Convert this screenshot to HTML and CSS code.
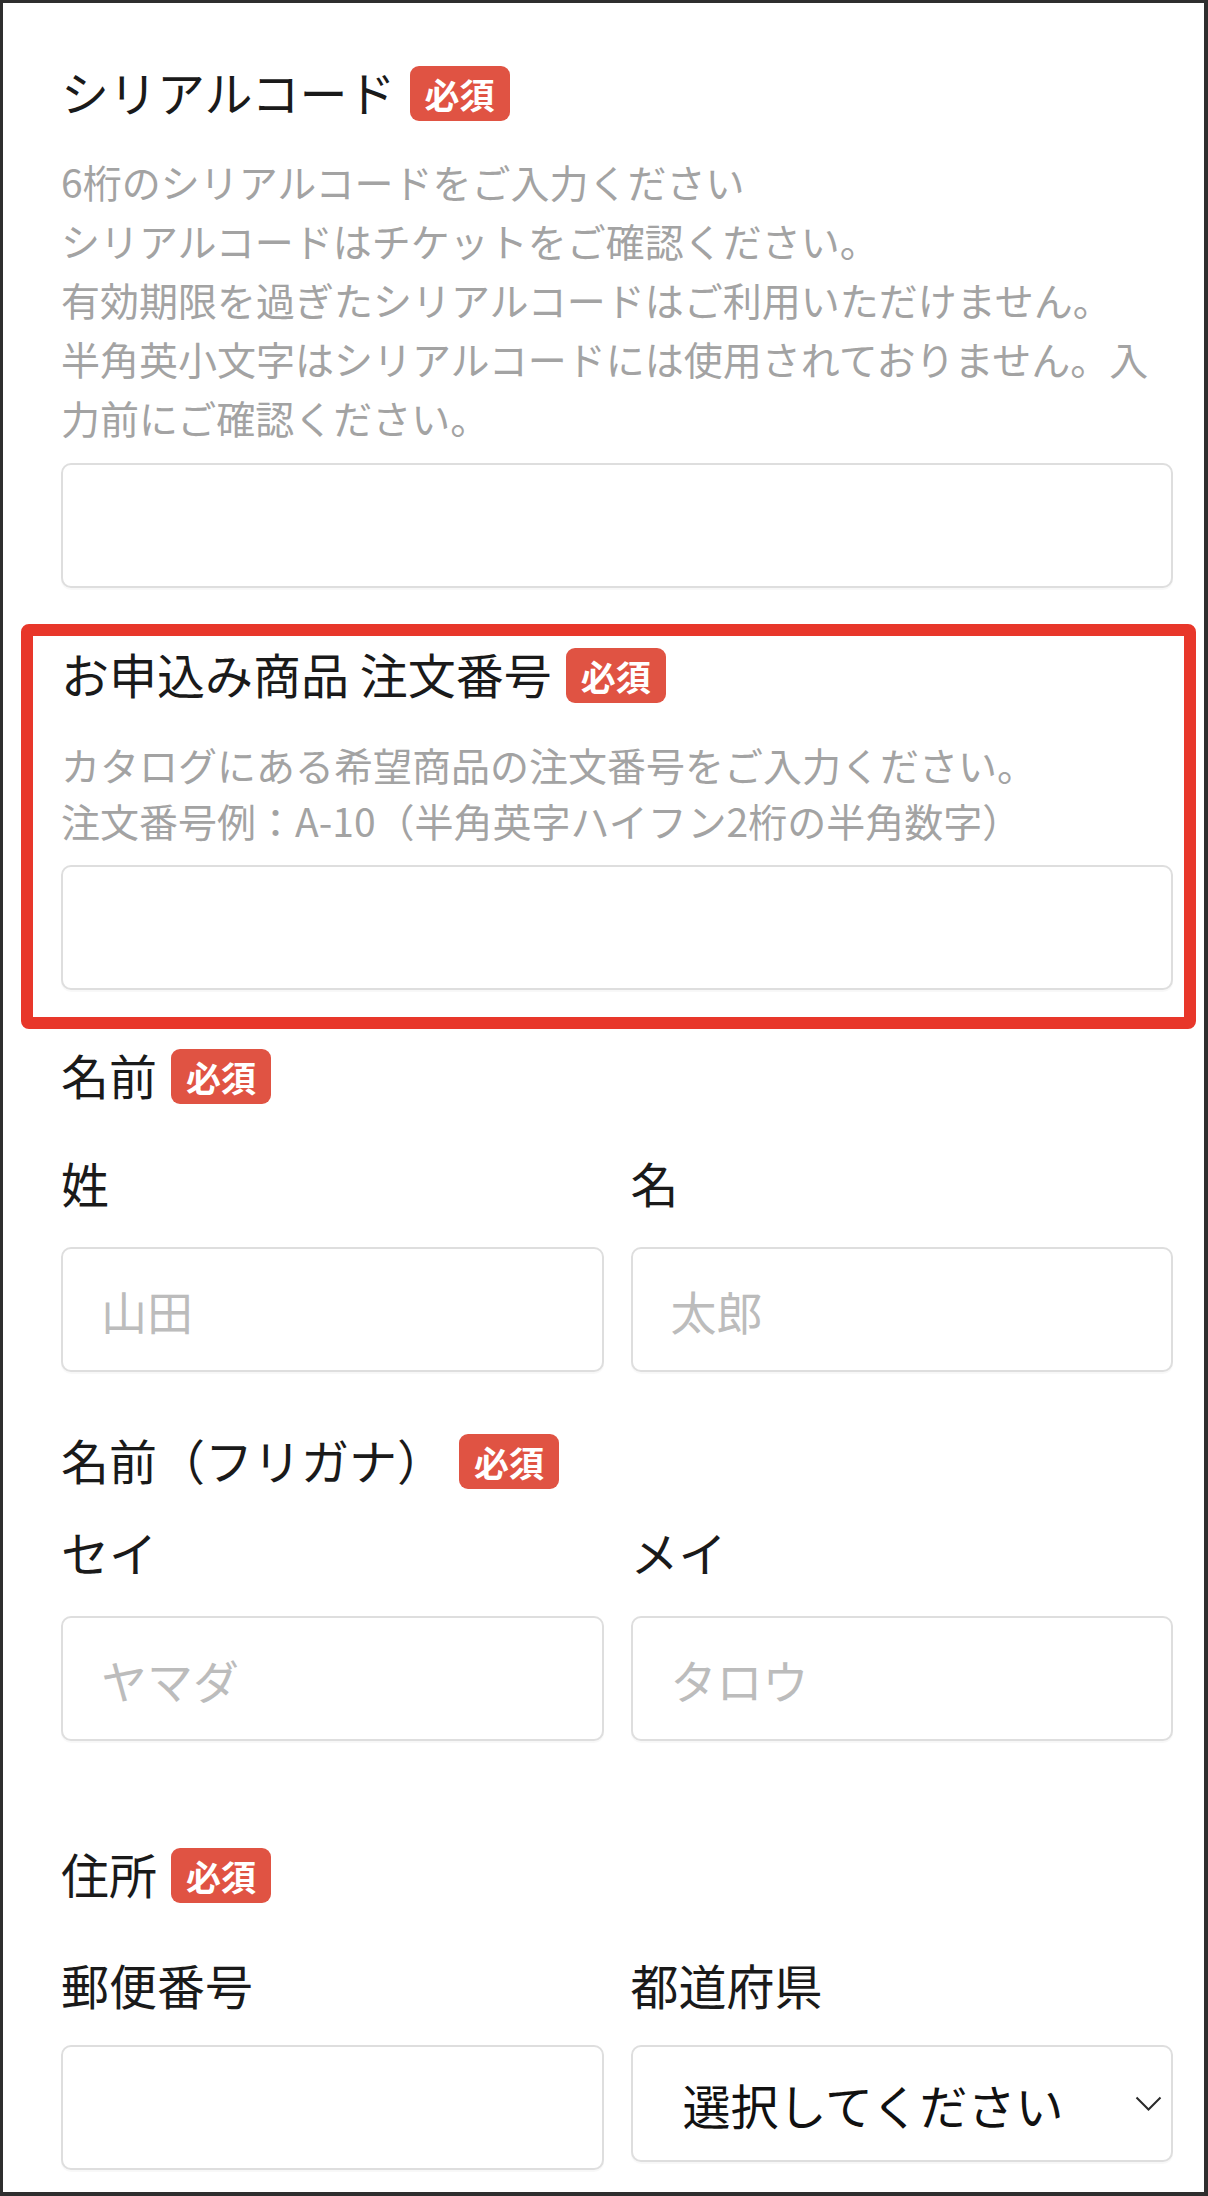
FILE: index.html
```html
<!DOCTYPE html>
<html lang="ja">
  <head>
    <meta charset="utf-8" />
    <title>お申込みフォーム</title>
    <meta name="viewport" content="width=device-width, initial-scale=1" />
    <link rel="stylesheet" href="styles.css">
  </head>
  <body>
    <div class="frame">
      <div class="field">
        <div class="field-title">
          <span>シリアルコード</span>
          <span class="badge">必須</span>
        </div>
        <p class="note">
          6桁のシリアルコードをご入力ください<br />
          シリアルコードはチケットをご確認ください。<br />
          有効期限を過ぎたシリアルコードはご利用いただけません。<br />
          半角英小文字はシリアルコードには使用されておりません。入力前にご確認ください。
        </p>
        <input class="text-input" type="text" />
      </div>

      <div class="field field-focus">
        <div class="field-title">
          <span>お申込み商品 注文番号</span>
          <span class="badge">必須</span>
        </div>
        <p class="note note-tight">
          カタログにある希望商品の注文番号をご入力ください。<br />
          注文番号例：A-10（半角英字ハイフン2桁の半角数字）
        </p>
        <input class="text-input" type="text" />
      </div>

      <div class="field field-name">
        <div class="field-title">
          <span>名前</span>
          <span class="badge">必須</span>
        </div>
        <div class="pair">
          <label class="sub">
            <span class="sub-label">姓</span>
            <input class="text-input" type="text" placeholder="山田" />
          </label>
          <label class="sub">
            <span class="sub-label">名</span>
            <input class="text-input" type="text" placeholder="太郎" />
          </label>
        </div>
      </div>

      <div class="field field-kana">
        <div class="field-title">
          <span>名前（フリガナ）</span>
          <span class="badge">必須</span>
        </div>
        <div class="pair">
          <label class="sub">
            <span class="sub-label">セイ</span>
            <input class="text-input" type="text" placeholder="ヤマダ" />
          </label>
          <label class="sub">
            <span class="sub-label">メイ</span>
            <input class="text-input" type="text" placeholder="タロウ" />
          </label>
        </div>
      </div>

      <div class="field field-address">
        <div class="field-title">
          <span>住所</span>
          <span class="badge">必須</span>
        </div>
        <div class="pair">
          <label class="sub">
            <span class="sub-label">郵便番号</span>
            <input class="text-input" type="text" />
          </label>
          <label class="sub">
            <span class="sub-label">都道府県</span>
            <span class="select-wrap">
              <select class="select">
                <option>選択してください</option>
                <option>北海道</option>
                <option>東京都</option>
              </select>
              <svg class="chevron" width="27" height="15" viewBox="0 0 27 15">
                <polyline points="1.5,1.5 13.5,13.5 25.5,1.5" fill="none" stroke="#2a2a2a" stroke-width="2" />
              </svg>
            </span>
          </label>
        </div>
      </div>
    </div>
  </body>
</html>
```

FILE: styles.css
```css
* {
  box-sizing: border-box;
}
body {
  margin: 0;
  background: #2e2e2e;
  font-family: "Noto Sans CJK JP", "Noto Sans", sans-serif;
  color: #1a1a1a;
}
.frame {
  height: 2196px;
  overflow: hidden;
  background: #fff;
  border: solid #2e2e2e;
  border-width: 3px 4px 4px 3px;
  padding: 60px 31px 0 58px;
}
.field-title {
  display: flex;
  align-items: center;
  font-size: 48px;
  line-height: 56px;
  height: 56px;
  white-space: nowrap;
}
.badge {
  margin: 4px 0 0 14px;
  height: 55px;
  padding: 0 15px;
  border-radius: 9px;
  background: #e05343;
  color: #fff;
  font-size: 35px;
  font-weight: bold;
  line-height: 55px;
}
.note {
  margin: 33px 0 16px;
  font-size: 39px;
  line-height: 59px;
  color: #a3a3a3;
}
.note-tight {
  margin: 35px 0 17px;
  line-height: 56px;
}
.text-input {
  display: block;
  width: 100%;
  height: 125px;
  margin: 0;
  padding: 0 38px;
  border: 2px solid #dedede;
  border-radius: 10px;
  box-shadow: 0 2px 1px #00000008;
  background: #fff;
  font-family: inherit;
  font-size: 46px;
  color: #1a1a1a;
  outline: none;
}
.text-input::placeholder {
  color: #bcbcbc;
}

/* highlighted field */
.field-focus {
  margin: 36px -23px 0 -40px;
  border: 12px solid #e8372a;
  border-radius: 8px;
  padding: 9px 11px 27px 28px;
}

.field-name {
  margin-top: 17px;
}
.field-kana {
  margin-top: 59px;
}
.field-address {
  margin-top: 104px;
}
.pair {
  display: grid;
  grid-template-columns: 1fr 1fr;
  column-gap: 27px;
  margin-top: 52px;
}
.field-kana .pair {
  margin-top: 36px;
}
.field-address .pair {
  margin-top: 55px;
}
.sub {
  display: block;
}
.sub-label {
  display: block;
  font-size: 48px;
  line-height: 56px;
  margin-bottom: 37px;
}
.field-address .sub-label {
  margin-bottom: 33px;
}
.select-wrap {
  display: block;
  position: relative;
}
.select {
  display: block;
  width: 100%;
  height: 117px;
  margin: 0;
  padding: 0 60px 0 50px;
  border: 2px solid #dedede;
  border-radius: 10px;
  box-shadow: 0 2px 1px #00000008;
  background: #fff;
  appearance: none;
  -webkit-appearance: none;
  font-family: inherit;
  font-size: 48px;
  color: #111;
}
.chevron {
  position: absolute;
  right: 11px;
  top: 51px;
  pointer-events: none;
}
```
